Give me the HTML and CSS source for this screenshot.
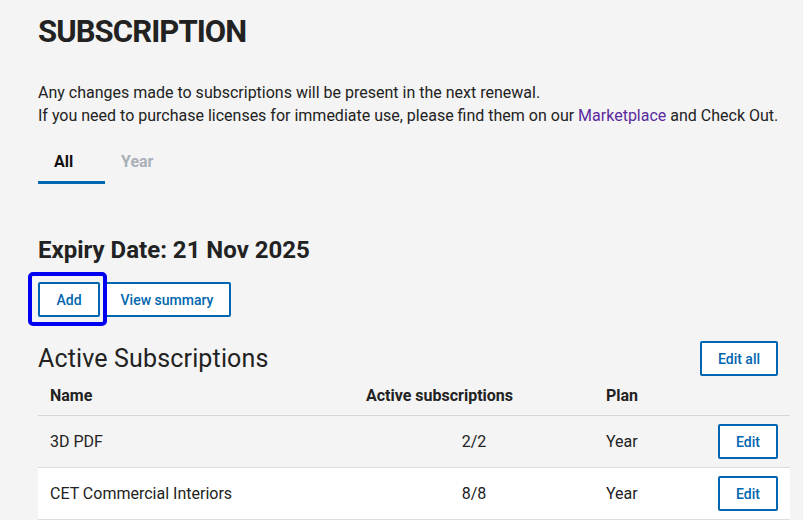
FILE: index.html
```html
<!DOCTYPE html>
<html>
<head>
<meta charset="utf-8">
<link rel="stylesheet" href="styles.css">
</head>
<body>
<main class="page">
  <h1 class="title">SUBSCRIPTION</h1>
  <p class="intro">Any changes made to subscriptions will be present in the next renewal.<br>If you need to purchase licenses for immediate use, please find them on our <a class="link" href="#">Marketplace</a> and Check Out.</p>
  <nav class="tabs">
    <span class="tab tab-active">All</span>
    <span class="tab">Year</span>
  </nav>
  <h2 class="expiry">Expiry Date: 21 Nov 2025</h2>
  <div class="actions">
    <span class="add-wrap"><button class="btn btn-add">Add</button><span class="focus-ring"></span></span>
    <button class="btn btn-summary">View summary</button>
  </div>
  <div class="section-head">
    <h3 class="section-title">Active Subscriptions</h3>
    <button class="btn btn-editall">Edit all</button>
  </div>
  <table class="table">
    <colgroup>
      <col class="w-name"><col class="w-active"><col class="w-plan"><col class="w-act">
    </colgroup>
    <thead>
      <tr><th class="c-name">Name</th><th>Active subscriptions</th><th>Plan</th><th class="c-act"></th></tr>
    </thead>
    <tbody>
      <tr><td class="c-name">3D PDF</td><td class="num">2/2</td><td>Year</td><td class="c-act"><button class="btn btn-edit">Edit</button></td></tr>
      <tr class="alt"><td class="c-name">CET Commercial Interiors</td><td class="num">8/8</td><td>Year</td><td class="c-act"><button class="btn btn-edit">Edit</button></td></tr>
    </tbody>
  </table>
</main>
</body>
</html>
```
FILE: styles.css
```css
html, body { margin: 0; padding: 0; background: #f4f4f4; }
body { font-family: Roboto, "Liberation Sans", sans-serif; color: #222; }
.page { padding: 0 13px 0 38px; }
.title { margin: 0; padding-top: 14px; font-size: 31px; font-weight: 700; letter-spacing: -0.9px; line-height: 36px; color: #222; }
.intro { margin: 31px 0 0; font-size: 16px; line-height: 23px; color: #222; }
.link { color: #5b2a9e; text-decoration: none; }
.tabs { display: flex; margin-top: 14px; }
.tab { font-size: 16px; font-weight: 700; color: #aab0b8; padding: 11px 16px 10px; border-bottom: 3px solid transparent; }
.tab-active { color: #111; width: 35px; border-bottom-color: #0068b3; }
.expiry { margin: 52px 0 0; font-size: 24px; font-weight: 700; line-height: 28px; color: #222; }
.actions { display: flex; align-items: center; margin-top: 18px; gap: 4px; }
.add-wrap { position: relative; display: inline-flex; }
.focus-ring { position: absolute; left: -10px; top: -10px; right: -7px; bottom: -9px; border: 4px solid #0000f0; border-radius: 5px; pointer-events: none; }
.btn { font-family: Roboto, "Liberation Sans", sans-serif; font-size: 14px; font-weight: 500; color: #0066b0; background: #fff; border: 2px solid #0066b0; border-radius: 2px; height: 35px; padding: 0; cursor: pointer; }
.btn-add { width: 62px; }
.btn-summary { width: 128px; margin-left: -1px; }
.section-head { display: flex; justify-content: space-between; align-items: center; margin-top: 24px; padding-right: 12px; }
.section-title { margin: 0; font-size: 25px; font-weight: 400; color: #222; letter-spacing: 0.15px; }
.btn-editall { width: 78px; }
.table { width: 100%; table-layout: fixed; border-collapse: collapse; margin-top: 3px; font-size: 16px; }
.w-name { width: 328px; }
.w-active { width: 240px; }
.w-plan { width: 110px; }
.table th { text-align: left; font-weight: 700; height: 33px; border-bottom: 1px solid #d6d6d6; padding: 0 0 3px; }
.table td { height: 51px; border-bottom: 1px solid #dddddd; padding: 0; }
.table .c-name { padding-left: 12px; }
.table .num { text-align: center; padding-right: 24px; }
.table .c-act { text-align: right; padding-right: 12px; }
.alt td { background: #fff; }
.btn-edit { width: 60px; }
```
